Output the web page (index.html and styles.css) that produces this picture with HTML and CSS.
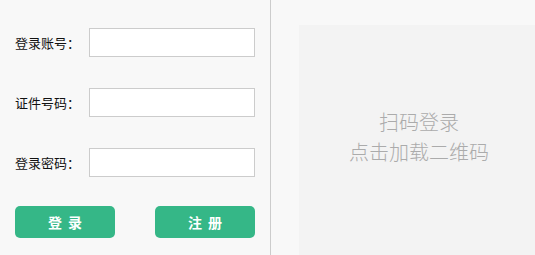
FILE: index.html
```html
<!DOCTYPE html>
<html lang="zh">
<head>
<meta charset="utf-8">
<title>登录</title>
<link rel="stylesheet" href="styles.css">
</head>
<body>
<div class="page">
  <div class="left">
    <div class="row">
      <label class="label">登录账号：</label>
      <input class="field" type="text">
    </div>
    <div class="row">
      <label class="label">证件号码：</label>
      <input class="field" type="text">
    </div>
    <div class="row">
      <label class="label">登录密码：</label>
      <input class="field" type="password">
    </div>
    <div class="actions">
      <button class="btn">登录</button>
      <button class="btn">注册</button>
    </div>
  </div>
  <div class="right">
    <div class="qr">
      <div>扫码登录</div>
      <div>点击加载二维码</div>
    </div>
  </div>
</div>
</body>
</html>
```

FILE: styles.css
```css
html, body {
  margin: 0;
  padding: 0;
  background: #f8f8f8;
  font-family: "Noto Sans CJK SC", "Noto Sans", sans-serif;
}
.page {
  display: flex;
  width: 535px;
  height: 255px;
  overflow: hidden;
}
.left {
  width: 255px;
  flex: none;
  padding: 28px 0 0 15px;
  border-right: 1px solid #cccccc;
  box-sizing: content-box;
}
.row {
  display: flex;
  align-items: center;
  height: 29px;
  margin-bottom: 31px;
}
.row:nth-child(3) {
  margin-bottom: 29px;
}
.label {
  width: 74px;
  flex: none;
  font-size: 13px;
  color: #111;
  line-height: 29px;
}
.field {
  width: 166px;
  height: 29px;
  box-sizing: border-box;
  border: 1px solid #cccccc;
  background: #fff;
  margin: 0;
  padding: 0 6px;
  outline: none;
}
.actions {
  display: flex;
  gap: 40px;
}
.btn {
  width: 100px;
  height: 32px;
  border: none;
  border-radius: 5px;
  background: #35b787;
  color: #fff;
  font-family: "Noto Sans CJK SC", sans-serif;
  font-size: 14px;
  font-weight: bold;
  letter-spacing: 6px;
  padding: 0 0 0 6px;
  margin: 0;
}
.right {
  flex: 1;
  padding: 25px 0 0 28px;
}
.qr {
  width: 240px;
  height: 240px;
  background: #f3f3f3;
  box-sizing: border-box;
  padding-top: 82px;
  text-align: center;
  color: #ababab;
  font-size: 20px;
  line-height: 30px;
  font-weight: 300;
}
```
